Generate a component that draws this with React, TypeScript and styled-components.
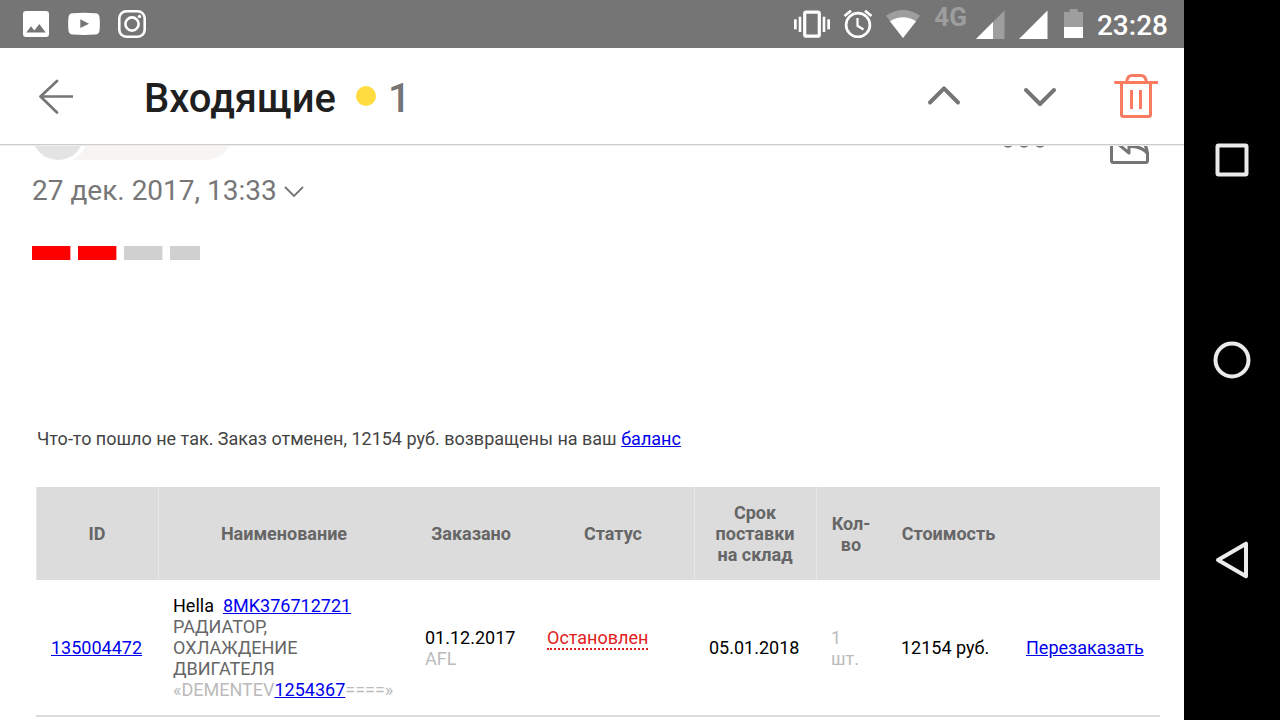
import React from 'react';
import styled, { createGlobalStyle } from 'styled-components';

const GlobalStyle = createGlobalStyle`
  * { box-sizing: border-box; }
  body { margin: 0; background: #fff; font-family: Roboto, "Noto Sans", sans-serif; }
  button { font: inherit; color: inherit; background: none; border: 0; padding: 0; cursor: pointer; }
  svg { display: block; flex: none; }
`;

const Screen = styled.div`
  display: grid;
  grid-template-columns: minmax(0, 1fr) 96px;
  min-height: 100vh;
`;

const AppArea = styled.div`
  display: flex;
  flex-direction: column;
  min-width: 0;
`;

const StatusBar = styled.div`
  display: flex;
  align-items: center;
  justify-content: space-between;
  height: 48px;
  padding: 0 16px 0 23px;
  background: #757575;
  color: #fff;
`;

const StatusGroup = styled.div<{ $gap: number }>`
  display: flex;
  align-items: center;
  gap: ${p => p.$gap}px;
`;

const NetworkType = styled.span`
  padding-bottom: 14px;
  font-size: 26px;
  line-height: 26px;
  font-weight: 700;
  color: #9e9e9e;
`;

const Clock = styled.time`
  padding-top: 4px;
  font-size: 28px;
  line-height: 32px;
  font-weight: 500;
`;

const Header = styled.header`
  display: flex;
  align-items: center;
  height: 97px;
  border-bottom: 1px solid #cdcdcd;
  background: #fff;
`;

const IconButton = styled.button<{ $width: number }>`
  display: flex;
  align-items: center;
  justify-content: center;
  width: ${p => p.$width}px;
  height: 96px;
`;

const Folder = styled.div`
  display: flex;
  flex: 1;
  align-items: center;
  margin-left: 32px;
  padding-top: 6px;
  font-size: 40px;
  line-height: 48px;
  font-weight: 500;
`;

const FolderTitle = styled.h1`
  margin: 0;
  font: inherit;
  color: #1f1f1f;
`;

const UnreadDot = styled.span`
  width: 20px;
  height: 20px;
  margin: 0 12px 6px 20px;
  border-radius: 50%;
  background: #ffdc40;
`;

const UnreadCount = styled.span`
  color: #757575;
`;

const Message = styled.main`
  flex: 1;
  overflow: hidden;
  border-top: 1px solid #ececec;
`;

const ParticipantRow = styled.div`
  display: flex;
  align-items: flex-end;
  height: 56px;
  margin-top: -38px;
  padding: 0 32px;
`;

const Chip = styled.div`
  align-self: flex-start;
  width: 200px;
  height: 52px;
  margin-right: auto;
  border-radius: 26px;
  background: #f6f5f3;
  overflow: hidden;
`;

const Avatar = styled.div`
  width: 52px;
  height: 52px;
  border-radius: 50%;
  background: #e3e3e3;
  box-shadow: 0 0 0 4px #fff;
`;

const ReplyButton = styled.button`
  margin-left: 62px;
`;

const DateButton = styled.button`
  display: flex;
  align-items: center;
  gap: 7px;
  margin: 11px 32px 0;
  font-size: 28px;
  line-height: 32px;
  color: #777;
`;

const Progress = styled.div`
  display: flex;
  gap: 8px;
  width: 168px;
  height: 14px;
  margin: 39px 32px 0;
  overflow: hidden;
`;

const ProgressStep = styled.span<{ $done?: boolean }>`
  flex: 0 0 38px;
  background: ${p => (p.$done ? '#ff0000' : '#d0d0d0')};
  box-shadow: 1px 0 0 ${p => (p.$done ? '#ffa0a0' : '#ececec')};
`;

const Notice = styled.p`
  margin: 168px 24px 38px 37px;
  font-size: 18px;
  line-height: 21px;
  color: #444;
`;

const Link = styled.a`
  color: #0000ee;
  text-decoration: underline;
`;

const TableWrap = styled.div`
  padding: 0 24px 0 36px;
`;

const Orders = styled.table`
  width: 100%;
  table-layout: fixed;
  border-collapse: separate;
  border-spacing: 0;
  font-size: 18px;
  line-height: 21px;
`;

const Col = styled.col<{ $width: number }>`
  width: ${p => p.$width}px;
`;

const HeadCell = styled.th<{ $divided?: boolean }>`
  padding: 15px;
  background: #dcdcdc;
  color: #666;
  font-weight: 700;
  text-align: center;
  box-shadow: ${p => (p.$divided ? 'inset 1px 0 0 #e6e6e6' : 'none')};
`;

const Cell = styled.td`
  padding: 15px;
  border-bottom: 2px solid #dcdcdc;
  color: #000;
  vertical-align: middle;
  white-space: nowrap;
`;

const Line = styled.div<{ $tone?: string }>`
  min-height: 21px;
  color: ${p => p.$tone || 'inherit'};
`;

const Brand = styled.span`
  margin-right: 9px;
`;

const Status = styled.span`
  color: #e02020;
  border-bottom: 2px dotted #e02020;
`;

const SystemNav = styled.nav`
  display: flex;
  flex-direction: column;
  padding: 60px 0;
  background: #000;
`;

const NavButton = styled.button`
  display: flex;
  flex: 1;
  align-items: center;
  justify-content: center;
`;

const grey = '#757575';
const dim = '#9e9e9e';

const PictureIcon = () => (
  <svg width="27" height="28" viewBox="23 10 27 28" fill="#fff">
    <path fillRule="evenodd" d="M26 11h20a3 3 0 0 1 3 3v20a3 3 0 0 1-3 3H26a3 3 0 0 1-3-3V14a3 3 0 0 1 3-3zM26.3 32.4h19.4L39.3 24l-4.9 6.4L31 26.2z" />
  </svg>
);

const YoutubeIcon = () => (
  <svg width="32" height="28" viewBox="68 10 32 28" fill="#fff">
    <path fillRule="evenodd" d="M72.500 13.200Q84 12.400 95.500 13.200Q99 13.500 99.500 17Q100.300 24 99.500 30.500Q99 34.200 95.500 34.500Q84 35.400 72.500 34.500Q69 34.200 68.500 30.500Q67.700 24 68.500 17Q69 13.500 72.500 13.200zM80.300 19.300V28L89 23.700z" />
  </svg>
);

const InstagramIcon = () => (
  <svg width="28" height="28" viewBox="118 10 28 28" fill="none" stroke="#fff" strokeWidth="2.600">
    <rect x="119.300" y="11.300" width="25.400" height="25.400" rx="7" />
    <circle cx="132" cy="24" r="6.600" />
    <circle cx="139.500" cy="16.500" r="1.700" fill="#fff" stroke="none" />
  </svg>
);

const VibrateIcon = () => (
  <svg width="36" height="28" viewBox="793 10 36 28" fill="#fff">
    <rect x="803.700" y="12.200" width="14.600" height="24" rx="1.500" fill="none" stroke="#fff" strokeWidth="3.200" />
    <rect x="793" y="19.300" width="2.700" height="10" />
    <rect x="797.700" y="16.700" width="2.600" height="15.300" />
    <rect x="821.700" y="16.700" width="2.600" height="15.300" />
    <rect x="826.300" y="19.300" width="2.700" height="10" />
  </svg>
);

const AlarmIcon = () => (
  <svg width="30" height="28" viewBox="842 10 30 28" fill="none" stroke="#fff" strokeWidth="2.700">
    <circle cx="857" cy="25" r="11.900" />
    <path d="M843.500 16l6.500-5.300M870.500 16l-6.500-5.300" />
    <path d="M856.500 18v7.800l6 3.700" strokeWidth="2.200" />
  </svg>
);

const WifiIcon = () => (
  <svg width="34" height="28" viewBox="885 10 34 28">
    <path d="M902 38L885 15.700Q902 4.300 919 15.700z" fill={dim} />
    <path d="M902 38L888.900 21.200Q902 13.300 915.100 21.200z" fill="#fff" />
  </svg>
);

const SignalIcon = ({ weak }: { weak?: boolean }) => (
  <svg width="29" height="30" viewBox="0 0 29 30">
    <path d="M0 30H28.500V1.500z" fill={weak ? dim : '#fff'} />
    {weak && <path d="M0 30H17V13z" fill="#fff" />}
  </svg>
);

const BatteryIcon = () => (
  <svg width="21" height="30" viewBox="1062 9 21 30">
    <path d="M1064 12h5.600V9h8v3h5.400v16h-19z" fill={dim} />
    <rect x="1064" y="27" width="19" height="11" fill="#fff" />
  </svg>
);

const BackIcon = () => (
  <svg width="36" height="36" viewBox="38 78 36 36" fill="none" stroke={grey} strokeWidth="2.700">
    <path d="M73 96.500H40.500" />
    <path d="M57 81L40.500 96.500L57 112.500" strokeLinejoin="round" strokeLinecap="round" />
  </svg>
);

const ChevronIcon = ({ up }: { up?: boolean }) => (
  <svg width="36" height="24" viewBox="0 0 36 24" fill="none" stroke={grey} strokeWidth="4" strokeLinecap="round" strokeLinejoin="round">
    <path d={up ? 'M4 18.500L18 4.300L32 18.500' : 'M4 6L18 20L32 6'} />
  </svg>
);

const TrashIcon = () => (
  <svg width="44" height="46" viewBox="1114 73 44 46" fill="none" stroke="#f97b61" strokeWidth="3">
    <path d="M1114.300 82.400H1158M1121.500 82.400V114.500Q1121.500 116.500 1123.500 116.500H1148.500Q1150.500 116.500 1150.500 114.500V82.400M1131.500 90v19M1140.500 90v19" />
    <path d="M1126.700 81.500Q1127.500 75.500 1132 75.500H1141Q1145.500 75.500 1146.300 81.500" />
  </svg>
);

const MoreIcon = () => (
  <svg width="44" height="28" viewBox="1002 136 44 28" fill="none" stroke={grey} strokeWidth="3.200">
    <circle cx="1008" cy="141.500" r="4.600" />
    <circle cx="1024" cy="141.500" r="4.600" />
    <circle cx="1040" cy="141.500" r="4.600" />
  </svg>
);

const ReplyIcon = () => (
  <svg width="44" height="40" viewBox="1108 124 44 40" fill="none" stroke={grey} strokeWidth="3" strokeLinejoin="round">
    <path d="M1124 127H1113.500Q1111.500 127 1111.500 129V160.500Q1111.500 162.500 1113.500 162.500H1145.500Q1147.500 162.500 1147.500 160.500V152" />
    <path d="M1129 128L1114.500 141L1129 153V146.500Q1141 145.500 1147.500 153.500Q1147 146 1142 141.500Q1137 136 1129 135.500z" />
  </svg>
);

const SmallChevronIcon = () => (
  <svg width="20" height="12" viewBox="0 0 20 12" fill="none" stroke={grey} strokeWidth="1.800">
    <path d="M1 2L10 11L19 2" />
  </svg>
);

const navShapes = [
  { label: 'Обзор', shape: <rect x="5.500" y="5.500" width="29" height="29" rx="1" /> },
  { label: 'Домой', shape: <circle cx="20" cy="20" r="16.500" /> },
  { label: 'Назад', shape: <path d="M6 20L34 3.700V36.300z" /> },
];

export default function App() {
  return (
    <>
      <GlobalStyle />
      <Screen>
        <AppArea>
          <StatusBar>
            <StatusGroup $gap={18}>
              <PictureIcon />
              <YoutubeIcon />
              <InstagramIcon />
            </StatusGroup>
            <StatusGroup $gap={14}>
              <StatusGroup $gap={13}>
                <VibrateIcon />
                <AlarmIcon />
                <WifiIcon />
              </StatusGroup>
              <StatusGroup $gap={9}>
                <NetworkType>4G</NetworkType>
                <SignalIcon weak />
              </StatusGroup>
              <SignalIcon />
              <BatteryIcon />
              <Clock>23:28</Clock>
            </StatusGroup>
          </StatusBar>

          <Header>
            <IconButton $width={112} aria-label="Назад к списку"><BackIcon /></IconButton>
            <Folder>
              <FolderTitle>Входящие</FolderTitle>
              <UnreadDot />
              <UnreadCount>1</UnreadCount>
            </Folder>
            <IconButton $width={96} aria-label="Предыдущее"><ChevronIcon up /></IconButton>
            <IconButton $width={96} aria-label="Следующее"><ChevronIcon /></IconButton>
            <IconButton $width={96} aria-label="Удалить"><TrashIcon /></IconButton>
          </Header>

          <Message>
            <ParticipantRow>
              <Chip><Avatar /></Chip>
              <button aria-label="Ещё"><MoreIcon /></button>
              <ReplyButton aria-label="Ответить"><ReplyIcon /></ReplyButton>
            </ParticipantRow>
            <DateButton>
              27 дек. 2017, 13:33
              <SmallChevronIcon />
            </DateButton>
            <Progress>
              <ProgressStep $done />
              <ProgressStep $done />
              <ProgressStep />
              <ProgressStep />
            </Progress>
            <Notice>
              Что-то пошло не так. Заказ отменен, 12154 руб. возвращены на ваш <Link href="#balance">баланс</Link>
            </Notice>
            <TableWrap>
              <Orders>
                <colgroup>
                  <Col $width={122} />
                  <Col $width={252} />
                  <Col $width={122} />
                  <Col $width={162} />
                  <Col $width={122} />
                  <Col $width={70} />
                  <Col $width={125} />
                  <Col $width={149} />
                </colgroup>
                <thead>
                  <tr>
                    <HeadCell $divided>ID</HeadCell>
                    <HeadCell $divided>Наименование</HeadCell>
                    <HeadCell>Заказано</HeadCell>
                    <HeadCell>Статус</HeadCell>
                    <HeadCell $divided>Срок поставки на склад</HeadCell>
                    <HeadCell $divided>Кол-<br />во</HeadCell>
                    <HeadCell>Стоимость</HeadCell>
                    <HeadCell />
                  </tr>
                </thead>
                <tbody>
                  <tr>
                    <Cell><Link href="#order">135004472</Link></Cell>
                    <Cell>
                      <Line><Brand>Hella</Brand><Link href="#part">8MK376712721</Link></Line>
                      <Line $tone="#666">РАДИАТОР,</Line>
                      <Line $tone="#666">ОХЛАЖДЕНИЕ</Line>
                      <Line $tone="#666">ДВИГАТЕЛЯ</Line>
                      <Line $tone="#bbb">«DEMENTEV<Link href="#phone">1254367</Link>====»</Line>
                    </Cell>
                    <Cell>
                      <Line>01.12.2017</Line>
                      <Line $tone="#bbb">AFL</Line>
                    </Cell>
                    <Cell>
                      <Line><Status>Остановлен</Status></Line>
                      <Line />
                    </Cell>
                    <Cell>05.01.2018</Cell>
                    <Cell>
                      <Line $tone="#bbb">1</Line>
                      <Line $tone="#bbb">шт.</Line>
                    </Cell>
                    <Cell>12154 руб.</Cell>
                    <Cell><Link href="#reorder">Перезаказать</Link></Cell>
                  </tr>
                </tbody>
              </Orders>
            </TableWrap>
          </Message>
        </AppArea>

        <SystemNav>
          {navShapes.map(item => (
            <NavButton key={item.label} aria-label={item.label}>
              <svg width="40" height="40" viewBox="0 0 40 40" fill="none" stroke="#ebebeb" strokeWidth="4" strokeLinejoin="round">
                {item.shape}
              </svg>
            </NavButton>
          ))}
        </SystemNav>
      </Screen>
    </>
  );
}
